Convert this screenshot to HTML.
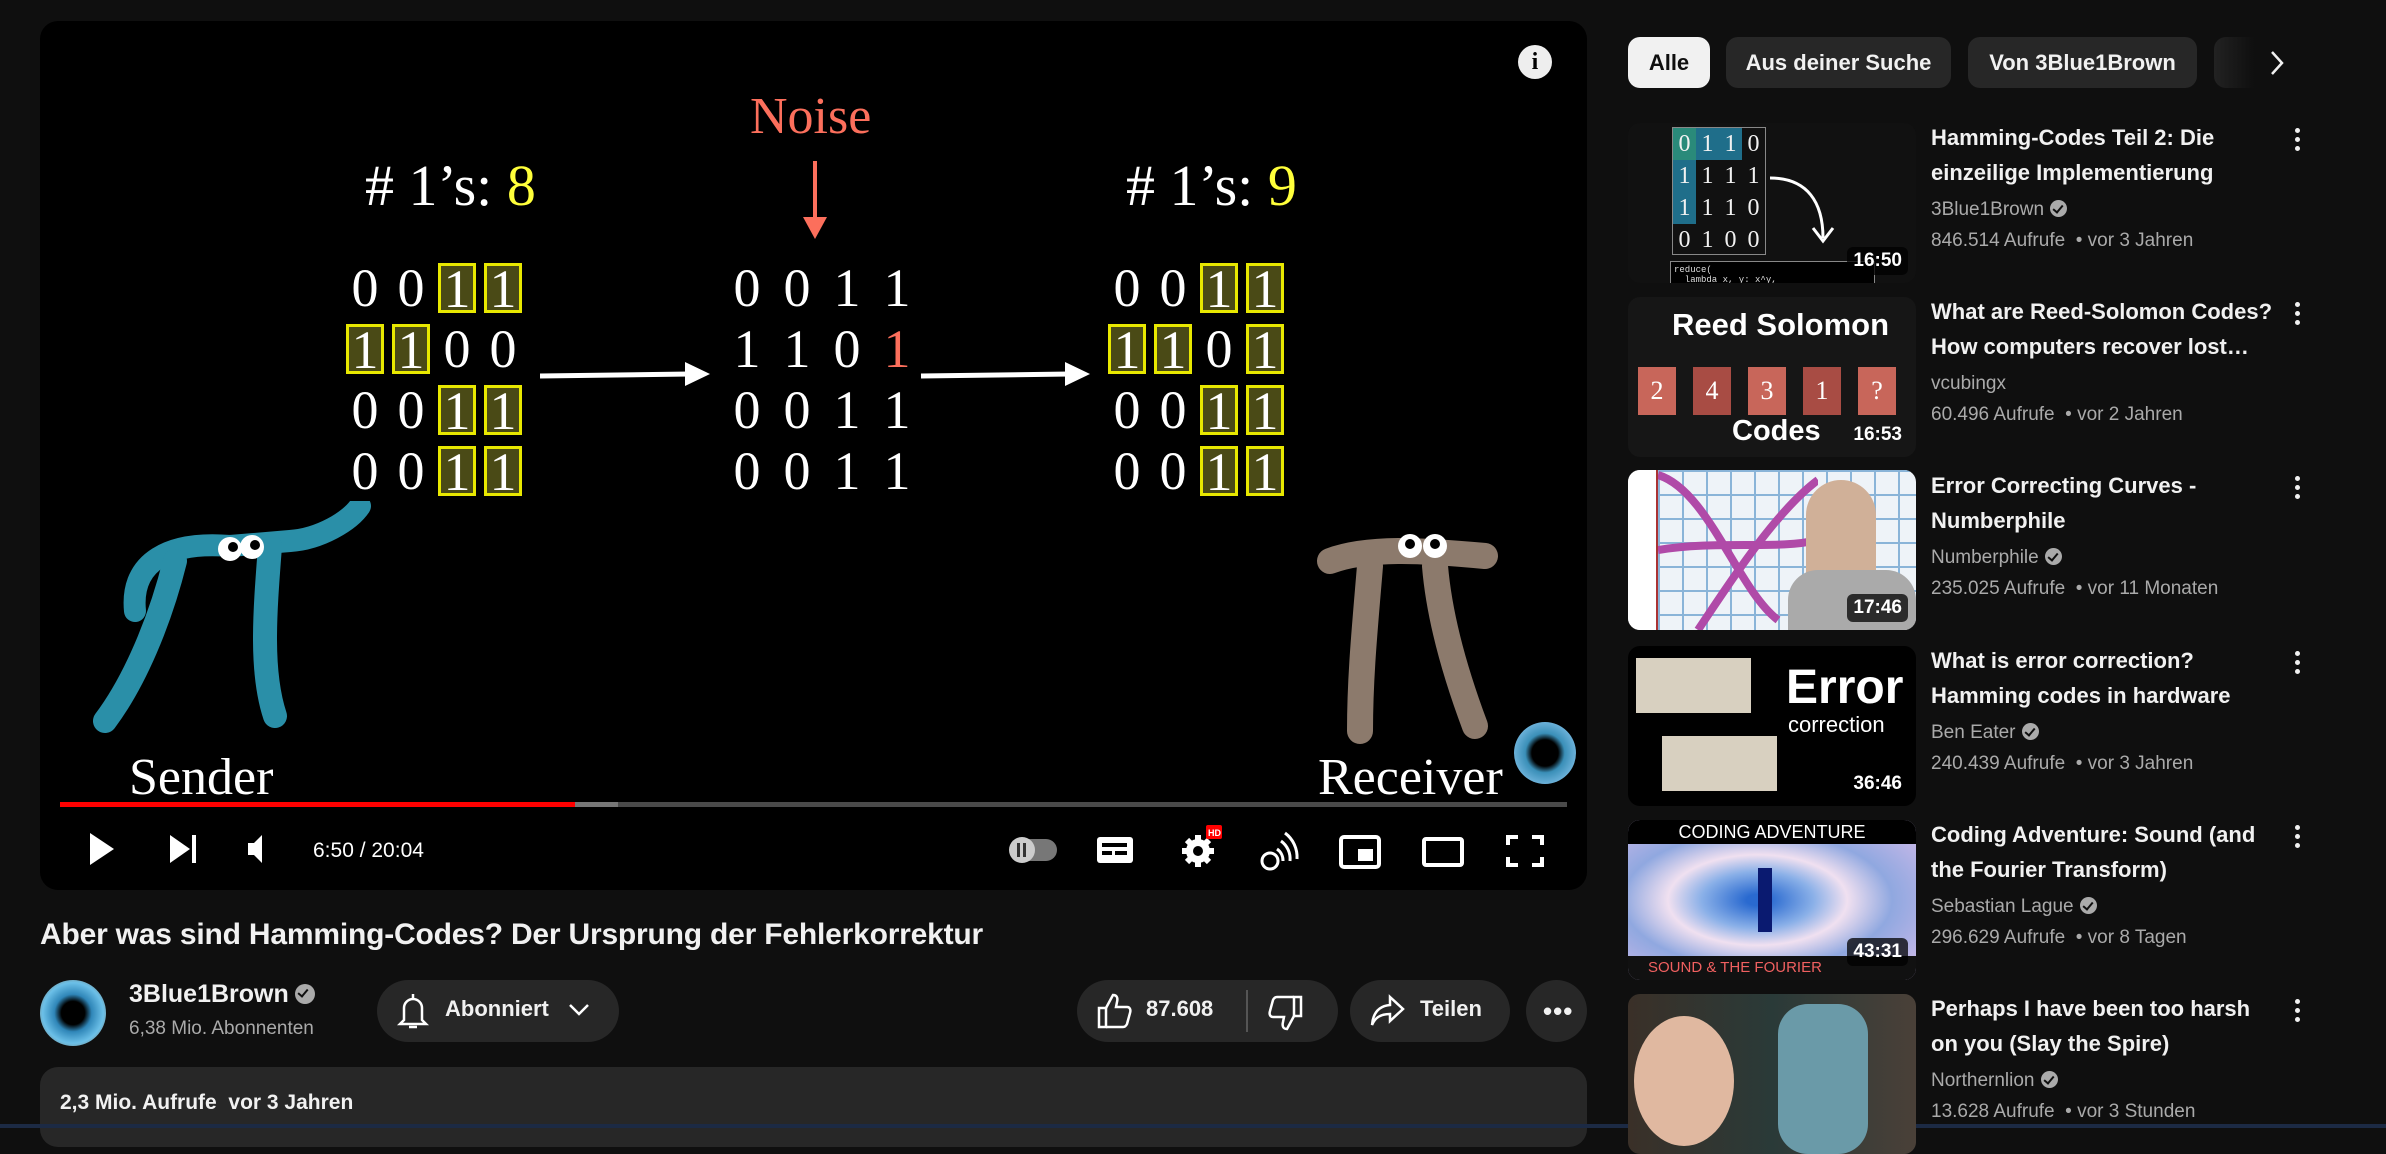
<!DOCTYPE html>
<html><head><meta charset="utf-8">
<style>
*{margin:0;padding:0;box-sizing:border-box}
body{width:2386px;height:1128px;background:#0f0f0f;font-family:"Liberation Sans",sans-serif;color:#f1f1f1;position:relative;overflow:hidden}
.a{position:absolute}
.serif{font-family:"Liberation Serif",serif}
.chip{position:absolute;top:37px;height:51px;border-radius:12px;background:#272727;color:#f1f1f1;font-size:22px;font-weight:bold;line-height:51px;text-align:center}
.th{position:absolute;left:1628px;width:288px;height:160px;border-radius:12px;overflow:hidden}
.dur{position:absolute;right:8px;bottom:8px;background:rgba(0,0,0,.75);color:#fff;font-size:19px;font-weight:bold;padding:3px 6px;border-radius:6px}
.tt{position:absolute;left:1931px;width:345px;font-size:22px;font-weight:bold;line-height:35px;color:#f1f1f1}
.ch{position:absolute;left:1931px;font-size:19px;color:#aaa}
.vw{position:absolute;left:1931px;font-size:19px;color:#aaa}
.dots{position:absolute;left:2294px;width:8px}
.dots i{display:block;width:5px;height:5px;border-radius:50%;background:#f1f1f1;margin:0 0 4px 1px}
.ver{display:inline-block;width:17px;height:17px;border-radius:50%;background:#aaa;vertical-align:-2px;margin-left:6px;position:relative}
.ver:after{content:"";position:absolute;left:5px;top:3px;width:4px;height:8px;border:solid #0f0f0f;border-width:0 2px 2px 0;transform:rotate(40deg)}
.pill{position:absolute;background:#272727;border-radius:35px;height:62px;top:980px}
.m{position:absolute;font-family:"Liberation Serif",serif;font-size:54px;color:#fff}
.m>div{display:flex;height:61px;align-items:center}
.yb{display:block;border:3px solid #e8e800;background:#4a4a16;width:38px;height:50px;line-height:46px;text-align:center;margin-right:8px}
.d{display:block;width:38px;text-align:center;margin-right:8px}
.m2 .d{margin-right:12px}
</style></head><body>

<div class="a" style="left:40px;top:21px;width:1547px;height:869px;background:#000;border-radius:18px;overflow:hidden">
  <div class="a" style="left:1478px;top:24px;width:34px;height:34px;border-radius:50%;background:#eee;color:#000;font-weight:bold;font-size:24px;text-align:center;line-height:34px;font-family:'Liberation Serif',serif">i</div>
  <div class="a serif" style="left:710px;top:66px;font-size:52px;color:#fc6f5c">Noise</div>
  <svg class="a" style="left:760px;top:140px" width="30" height="80"><line x1="15" y1="0" x2="15" y2="62" stroke="#fc6f5c" stroke-width="4"/><polygon points="3,56 27,56 15,78" fill="#fc6f5c"/></svg>
  <div class="a serif" style="left:325px;top:131px;font-size:58px;color:#fff"># 1’s: <span style="color:#ffff3a">8</span></div>
  <div class="a serif" style="left:1086px;top:131px;font-size:58px;color:#fff"># 1’s: <span style="color:#ffff3a">9</span></div>
  <div class="m" style="left:306px;top:236px">
    <div><span class="d">0</span><span class="d">0</span><span class="yb">1</span><span class="yb">1</span></div>
    <div><span class="yb">1</span><span class="yb">1</span><span class="d">0</span><span class="d">0</span></div>
    <div><span class="d">0</span><span class="d">0</span><span class="yb">1</span><span class="yb">1</span></div>
    <div><span class="d">0</span><span class="d">0</span><span class="yb">1</span><span class="yb">1</span></div>
  </div>
  <div class="m m2" style="left:688px;top:236px">
    <div><span class="d">0</span><span class="d">0</span><span class="d">1</span><span class="d">1</span></div>
    <div><span class="d">1</span><span class="d">1</span><span class="d">0</span><span class="d" style="color:#fc6f5c">1</span></div>
    <div><span class="d">0</span><span class="d">0</span><span class="d">1</span><span class="d">1</span></div>
    <div><span class="d">0</span><span class="d">0</span><span class="d">1</span><span class="d">1</span></div>
  </div>
  <div class="m" style="left:1068px;top:236px">
    <div><span class="d">0</span><span class="d">0</span><span class="yb">1</span><span class="yb">1</span></div>
    <div><span class="yb">1</span><span class="yb">1</span><span class="d">0</span><span class="yb">1</span></div>
    <div><span class="d">0</span><span class="d">0</span><span class="yb">1</span><span class="yb">1</span></div>
    <div><span class="d">0</span><span class="d">0</span><span class="yb">1</span><span class="yb">1</span></div>
  </div>
  <svg class="a" style="left:500px;top:335px" width="600" height="40">
    <line x1="0" y1="20" x2="150" y2="18" stroke="#fff" stroke-width="5"/><polygon points="145,6 170,18 145,30" fill="#fff"/>
    <line x1="381" y1="20" x2="530" y2="18" stroke="#fff" stroke-width="5"/><polygon points="525,6 550,18 525,30" fill="#fff"/>
  </svg>
  <svg class="a" style="left:50px;top:480px" width="290" height="240">
    <path d="M45 110 C40 60 80 40 140 45 L200 40 C230 38 260 20 270 5" stroke="#2a8fa8" stroke-width="22" fill="none" stroke-linecap="round"/>
    <path d="M85 60 C70 120 45 180 15 220" stroke="#2a8fa8" stroke-width="24" fill="none" stroke-linecap="round"/>
    <path d="M180 45 C175 110 170 170 185 215" stroke="#2a8fa8" stroke-width="24" fill="none" stroke-linecap="round"/>
    <circle cx="140" cy="48" r="12" fill="#fff"/><circle cx="162" cy="46" r="12" fill="#fff"/>
    <circle cx="143" cy="46" r="5" fill="#000"/><circle cx="165" cy="44" r="5" fill="#000"/>
  </svg>
  <svg class="a" style="left:1270px;top:485px" width="200" height="240">
    <path d="M20 55 C60 40 120 45 175 50" stroke="#8c7a6c" stroke-width="26" fill="none" stroke-linecap="round"/>
    <path d="M60 60 C55 120 50 170 50 225" stroke="#8c7a6c" stroke-width="26" fill="none" stroke-linecap="round"/>
    <path d="M125 60 C130 120 150 180 165 220" stroke="#8c7a6c" stroke-width="26" fill="none" stroke-linecap="round"/>
    <circle cx="100" cy="40" r="12" fill="#fff"/><circle cx="125" cy="40" r="12" fill="#fff"/>
    <circle cx="100" cy="38" r="5" fill="#000"/><circle cx="125" cy="38" r="5" fill="#000"/>
  </svg>
  <div class="a serif" style="left:89px;top:727px;font-size:52px;color:#fff">Sender</div>
  <div class="a serif" style="left:1278px;top:727px;font-size:52px;color:#fff">Receiver</div>
  <div class="a" style="left:1474px;top:701px;width:62px;height:62px;border-radius:50%;background:radial-gradient(circle,#000 30%,#3a8fb8 45%,#6ab0d8 70%,#8a6040 100%)"></div>
  <div class="a" style="left:20px;top:781px;width:1507px;height:5px;background:#4a4a4a"></div>
  <div class="a" style="left:20px;top:781px;width:558px;height:5px;background:#777"></div>
  <div class="a" style="left:20px;top:781px;width:515px;height:5px;background:#f00"></div>
  <svg class="a" style="left:16px;top:800px" width="1520" height="56" fill="#fff">
    <polygon points="34,12 34,44 58,28"/>
    <polygon points="114,14 114,42 134,28"/><rect x="136" y="14" width="4" height="28"/>
    <polygon points="192,22 198,22 206,14 206,42 198,34 192,34"/>
    <text x="257" y="36" font-family="Liberation Sans" font-size="21" fill="#fff">6:50 / 20:04</text>
    <rect x="955" y="18" width="46" height="22" rx="11" fill="#777"/><circle cx="966" cy="29" r="13" fill="#ccc"/><rect x="961" y="22" width="3" height="14" fill="#333"/><rect x="967" y="22" width="3" height="14" fill="#333"/>
    <rect x="1041" y="16" width="36" height="26" rx="3"/><rect x="1046" y="30" width="10" height="4" fill="#000"/><rect x="1059" y="30" width="12" height="4" fill="#000"/><rect x="1046" y="22" width="25" height="4" fill="#000"/>
    <g stroke="#fff" stroke-width="6"><line x1="1142" y1="14" x2="1142" y2="46"/><line x1="1126" y1="30" x2="1158" y2="30"/><line x1="1131" y1="19" x2="1153" y2="41"/><line x1="1131" y1="41" x2="1153" y2="19"/></g>
    <circle cx="1142" cy="30" r="12"/><circle cx="1142" cy="30" r="5" fill="#000"/>
    <rect x="1150" y="4" width="16" height="14" rx="2" fill="#f00"/><text x="1152" y="15" font-size="9" font-weight="bold" fill="#fff" font-family="Liberation Sans">HD</text>
    <g fill="none" stroke="#fff" stroke-width="3"><circle cx="1214" cy="40" r="8"/><path d="M1221 28 a14 14 0 0 1 6 12"/><path d="M1225 20 a22 22 0 0 1 9 20"/><path d="M1229 12 a30 30 0 0 1 12 26"/></g>
    <rect x="1285" y="16" width="38" height="30" rx="3" fill="none" stroke="#fff" stroke-width="4"/><rect x="1302" y="28" width="15" height="12"/>
    <rect x="1368" y="18" width="38" height="26" rx="2" fill="none" stroke="#fff" stroke-width="4"/>
    <g fill="none" stroke="#fff" stroke-width="4"><path d="M1452 24 V16 H1462"/><path d="M1476 16 H1486 V24"/><path d="M1452 36 V44 H1462"/><path d="M1476 44 H1486 V36"/></g>
  </svg>
</div>

<div class="a" style="left:40px;top:918px;font-size:30px;font-weight:bold;color:#f1f1f1;letter-spacing:-0.2px">Aber was sind Hamming-Codes? Der Ursprung der Fehlerkorrektur</div>
<div class="a" style="left:40px;top:980px;width:66px;height:66px;border-radius:50%;background:radial-gradient(circle,#000 25%,#2f86b8 40%,#6cc0e8 65%,#8a5a30 100%)"></div>
<div class="a" style="left:129px;top:980px;font-size:25px;font-weight:bold">3Blue1Brown<span class="ver" style="width:20px;height:20px"></span></div>
<div class="a" style="left:129px;top:1018px;font-size:19px;color:#aaa">6,38 Mio. Abonnenten</div>
<div class="pill" style="left:377px;width:242px"></div>
<svg class="a" style="left:396px;top:992px" width="34" height="40" fill="none" stroke="#fff" stroke-width="2.5"><path d="M8 28 V16 a9 9 0 0 1 18 0 V28 L30 32 H4 Z"/><path d="M13 35 h8"/><path d="M17 2 v5"/></svg>
<div class="a" style="left:445px;top:996px;font-size:22px;font-weight:bold">Abonniert</div>
<svg class="a" style="left:568px;top:1002px" width="22" height="16" fill="none" stroke="#fff" stroke-width="2.5"><path d="M2 3 L11 12 L20 3"/></svg>
<div class="pill" style="left:1077px;width:261px"></div>
<div class="a" style="left:1246px;top:990px;width:2px;height:42px;background:#555"></div>
<svg class="a" style="left:1096px;top:992px" width="36" height="38" fill="none" stroke="#fff" stroke-width="2.5"><path d="M3 16 H10 V35 H3 Z"/><path d="M10 16 L17 3 C21 3 22 6 21 10 L20 15 H31 C34 15 35 18 34 21 L31 32 C30 34 29 35 27 35 H10"/></svg>
<div class="a" style="left:1146px;top:996px;font-size:22px;font-weight:bold">87.608</div>
<svg class="a" style="left:1268px;top:994px" width="36" height="38" fill="none" stroke="#fff" stroke-width="2.5"><path d="M33 22 H26 V3 H33 Z"/><path d="M26 22 L19 35 C15 35 14 32 15 28 L16 23 H5 C2 23 1 20 2 17 L5 6 C6 4 7 3 9 3 H26"/></svg>
<div class="pill" style="left:1350px;width:160px"></div>
<svg class="a" style="left:1370px;top:994px" width="36" height="34" fill="none" stroke="#fff" stroke-width="2.5"><path d="M20 3 L33 15 L20 27 V20 C10 20 5 24 2 31 C3 19 9 12 20 11 Z"/></svg>
<div class="a" style="left:1420px;top:996px;font-size:22px;font-weight:bold">Teilen</div>
<div class="pill" style="left:1526px;width:61px;border-radius:50%"></div>
<div class="a" style="left:1543px;top:996px;font-size:26px;font-weight:bold;letter-spacing:1px">•••</div>
<div class="a" style="left:40px;top:1067px;width:1547px;height:80px;background:#272727;border-radius:18px"></div>
<div class="a" style="left:60px;top:1091px;font-size:21px;font-weight:bold">2,3 Mio. Aufrufe &nbsp;vor 3 Jahren</div>
<div class="a" style="left:0;top:1124px;width:2386px;height:4px;background:#1c2a44"></div>

<div class="chip" style="left:1628px;width:82px;background:#f1f1f1;color:#0f0f0f">Alle</div>
<div class="chip" style="left:1726px;width:225px">Aus deiner Suche</div>
<div class="chip" style="left:1968px;width:229px">Von 3Blue1Brown</div>
<div class="chip" style="left:2214px;width:40px;border-radius:12px 0 0 12px;background:linear-gradient(90deg,#222,#0f0f0f)"></div>
<svg class="a" style="left:2268px;top:50px" width="18" height="26" fill="none" stroke="#f1f1f1" stroke-width="2.5"><path d="M4 2 L14 13 L4 24"/></svg>

<div class="th" style="top:123px;background:#111">
  <div class="a" style="left:44px;top:4px;width:94px;height:128px;display:grid;grid-template-columns:repeat(4,1fr);border:1px solid #888;font-family:'Liberation Serif';font-size:24px;text-align:center;line-height:32px">
    <div style="background:#2a8a7a">0</div><div style="background:#1f6e8a">1</div><div style="background:#1f6e8a">1</div><div>0</div>
    <div style="background:#1f6e8a">1</div><div>1</div><div>1</div><div>1</div>
    <div style="background:#1f6e8a">1</div><div>1</div><div>1</div><div>0</div>
    <div>0</div><div>1</div><div>0</div><div>0</div></div>
  <svg class="a" style="left:140px;top:50px" width="70" height="75" fill="none" stroke="#fff" stroke-width="3"><path d="M2 5 C40 5 55 30 55 65"/><path d="M45 55 L55 68 L65 55"/></svg>
  <div class="a" style="left:42px;top:138px;width:205px;height:60px;border:1px solid #888;background:#000;font-family:'Liberation Mono';font-size:9px;color:#ddd;padding:3px">reduce(<br>&nbsp;&nbsp;lambda x, y: x^y,<br>&nbsp;&nbsp;(i for (i, bit) in enumerate(block) if</div>
  <div class="dur">16:50</div></div>
<div class="tt" style="top:120px">Hamming-Codes Teil 2: Die einzeilige Implementierung</div>
<div class="ch" style="top:199px">3Blue1Brown<span class="ver"></span></div>
<div class="vw" style="top:230px">846.514 Aufrufe &nbsp;• vor 3 Jahren</div>
<div class="dots" style="top:128px"><i></i><i></i><i></i></div>

<div class="th" style="top:297px;background:#161616">
  <div class="a" style="left:44px;top:10px;font-size:31px;font-weight:bold;color:#fff">Reed Solomon</div>
  <div class="a" style="left:10px;top:70px;display:flex;gap:17px;font-family:'Liberation Serif';font-size:26px;color:#fff">
    <div style="width:38px;height:48px;background:#c8665a;text-align:center;line-height:48px">2</div><div style="width:38px;height:48px;background:#a84c44;text-align:center;line-height:48px">4</div><div style="width:38px;height:48px;background:#c8665a;text-align:center;line-height:48px">3</div><div style="width:38px;height:48px;background:#a84c44;text-align:center;line-height:48px">1</div><div style="width:38px;height:48px;background:#c8665a;text-align:center;line-height:48px">?</div></div>
  <div class="a" style="left:104px;top:118px;font-size:29px;font-weight:bold;color:#fff">Codes</div>
  <div class="dur" style="background:none">16:53</div></div>
<div class="tt" style="top:294px">What are Reed-Solomon Codes? How computers recover lost…</div>
<div class="ch" style="top:373px">vcubingx</div>
<div class="vw" style="top:404px">60.496 Aufrufe &nbsp;• vor 2 Jahren</div>
<div class="dots" style="top:302px"><i></i><i></i><i></i></div>

<div class="th" style="top:470px;background:#eef3f8">
  <div class="a" style="left:0;top:0;width:30px;height:160px;background:#fff;border-right:2px solid #a33"></div>
  <div class="a" style="left:30px;top:0;width:258px;height:160px;background-image:linear-gradient(#8ab4d8 2px,transparent 2px),linear-gradient(90deg,#8ab4d8 2px,transparent 2px);background-size:24px 24px"></div>
  <svg class="a" style="left:30px;top:0" width="160" height="160" fill="none" stroke="#b04aa8" stroke-width="8"><path d="M0 5 C50 20 80 120 120 150"/><path d="M0 80 C60 70 120 80 160 70"/><path d="M40 160 C80 100 120 40 160 10"/></svg>
  <div class="a" style="left:178px;top:10px;width:70px;height:150px;border-radius:35px 35px 0 0;background:#d0b098"></div>
  <div class="a" style="left:160px;top:100px;width:128px;height:60px;border-radius:30px 30px 0 0;background:#aaa"></div>
  <div class="dur">17:46</div></div>
<div class="tt" style="top:468px">Error Correcting Curves - Numberphile</div>
<div class="ch" style="top:547px">Numberphile<span class="ver"></span></div>
<div class="vw" style="top:578px">235.025 Aufrufe &nbsp;• vor 11 Monaten</div>
<div class="dots" style="top:476px"><i></i><i></i><i></i></div>

<div class="th" style="top:646px;background:#000">
  <div class="a" style="left:8px;top:12px;width:115px;height:55px;background:#d8d0c0"></div>
  <div class="a" style="left:34px;top:90px;width:115px;height:55px;background:#d8d0c0"></div>
  <div class="a" style="left:78px;top:162px;width:115px;height:50px;background:#d8d0c0"></div>
  <div class="a" style="left:158px;top:14px;font-size:48px;font-weight:bold;color:#fff">Error</div>
  <div class="a" style="left:160px;top:66px;font-size:22px;color:#fff">correction</div>
  <div class="dur">36:46</div></div>
<div class="tt" style="top:643px">What is error correction? Hamming codes in hardware</div>
<div class="ch" style="top:722px">Ben Eater<span class="ver"></span></div>
<div class="vw" style="top:753px">240.439 Aufrufe &nbsp;• vor 3 Jahren</div>
<div class="dots" style="top:651px"><i></i><i></i><i></i></div>

<div class="th" style="top:820px;background:radial-gradient(ellipse at 45% 50%,#2a6ad0 5%,#8ab0e8 25%,#f0e0f0 40%,#90a8e0 60%,#c8b8e8 90%)">
  <div class="a" style="left:0;top:0;width:288px;height:24px;background:#000;color:#fff;font-size:18px;text-align:center;line-height:24px">CODING ADVENTURE</div>
  <div class="a" style="left:130px;top:48px;width:14px;height:64px;background:#0a1a70"></div>
  <div class="a" style="left:0;top:136px;width:288px;height:24px;background:#111;color:#f06060;font-size:15px;padding-left:20px;line-height:24px">SOUND &amp; THE FOURIER TRANSFORM</div>
  <div class="dur" style="bottom:14px">43:31</div></div>
<div class="tt" style="top:817px">Coding Adventure: Sound (and the Fourier Transform)</div>
<div class="ch" style="top:896px">Sebastian Lague<span class="ver"></span></div>
<div class="vw" style="top:927px">296.629 Aufrufe &nbsp;• vor 8 Tagen</div>
<div class="dots" style="top:825px"><i></i><i></i><i></i></div>

<div class="th" style="top:994px;background:linear-gradient(90deg,#3a3028,#2a3a38 50%,#4a4038)">
  <div class="a" style="left:6px;top:22px;width:100px;height:130px;border-radius:50%;background:#e0b8a0"></div>
  <div class="a" style="left:150px;top:10px;width:90px;height:150px;border-radius:30px;background:#6a9aa8"></div>
</div>
<div class="tt" style="top:991px">Perhaps I have been too harsh on you (Slay the Spire)</div>
<div class="ch" style="top:1070px">Northernlion<span class="ver"></span></div>
<div class="vw" style="top:1101px">13.628 Aufrufe &nbsp;• vor 3 Stunden</div>
<div class="dots" style="top:999px"><i></i><i></i><i></i></div>
</body></html>
